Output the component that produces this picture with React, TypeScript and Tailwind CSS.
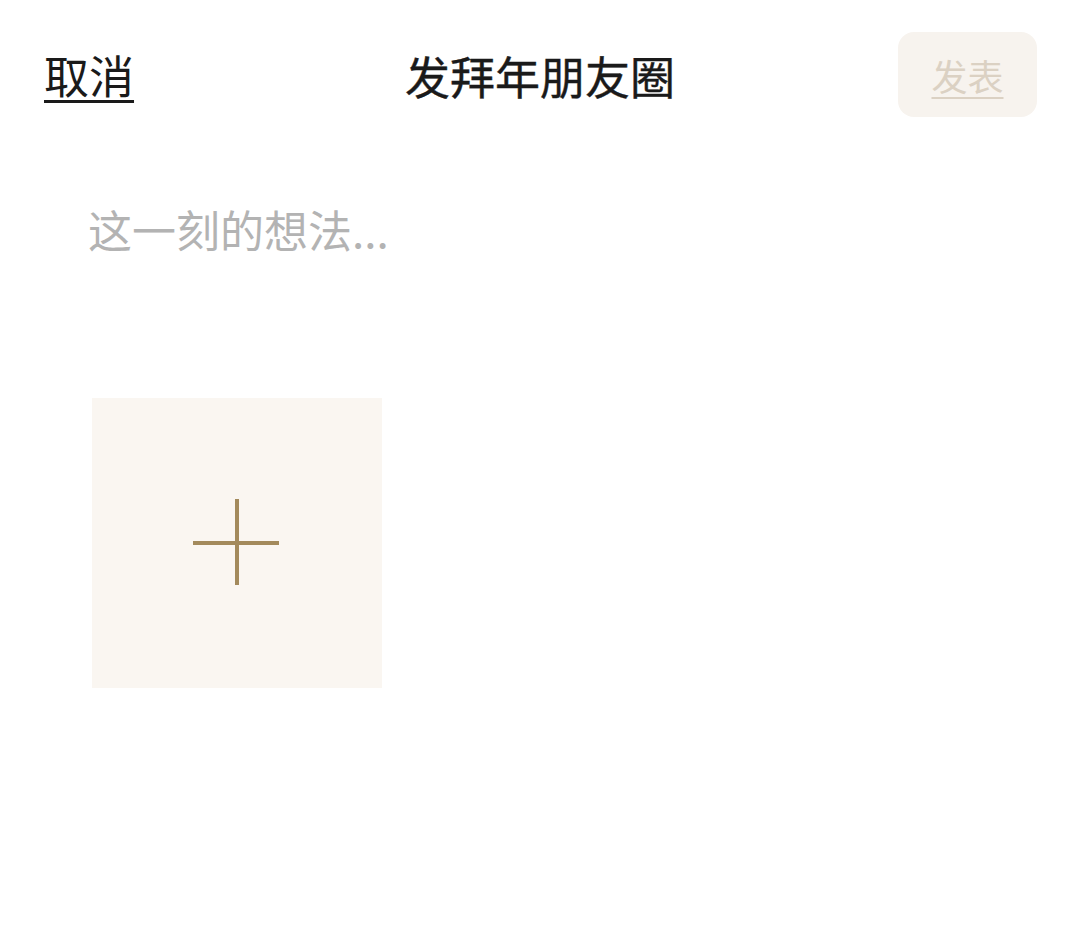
import React from "react";

const font = { fontFamily: '"Noto Sans CJK SC", "Noto Sans", sans-serif' };

function PlusTile() {
  return (
    <button className="flex h-[290px] w-[290px] items-center justify-center bg-[#faf6f1]">
      <svg width="88" height="88" viewBox="0 0 88 88" fill="none">
        <path d="M44 0V86M0 44H86" stroke="#a38a5c" strokeWidth="4" />
      </svg>
    </button>
  );
}

export default function App() {
  return (
    <div className="min-h-screen bg-white text-[#1a1a1a]" style={font}>
      {/* Top bar */}
      <header className="relative flex items-center justify-between pl-[44px] pr-[43px] pt-[32px]">
        <button className="text-[45px] leading-none underline decoration-[3px] underline-offset-[6px]">
          取消
        </button>
        <h1 className="absolute left-1/2 top-[53px] -translate-x-1/2 text-[45px] font-normal leading-none [-webkit-text-stroke:0.4px_#1a1a1a]">
          发拜年朋友圈
        </h1>
        <button className="flex h-[85px] w-[139px] items-center justify-center rounded-[16px] bg-[#f7f3ee] text-[36px] leading-none text-[#dbd1c3] underline decoration-[2px] underline-offset-[6px]">
          发表
        </button>
      </header>

      {/* Text input */}
      <div className="pl-[88px] pt-[90px]">
        <textarea
          placeholder="这一刻的想法..."
          className="h-[150px] w-[900px] resize-none bg-transparent text-[44px] leading-none text-[#1a1a1a] outline-none placeholder:text-[#b3b3b3]"
          style={font}
        />
      </div>

      {/* Image picker */}
      <div className="pl-[92px] pt-[36px]">
        <PlusTile />
      </div>
    </div>
  );
}
